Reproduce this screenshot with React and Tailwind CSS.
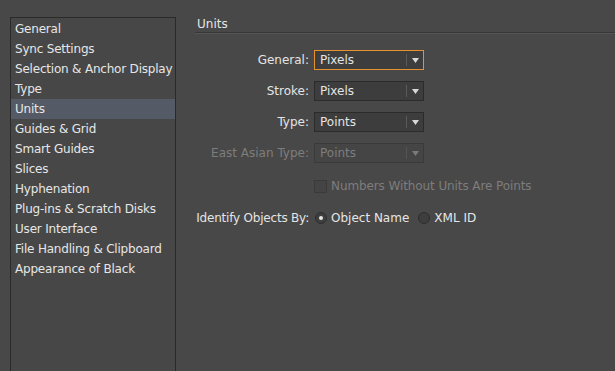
import React from "react";

const items = [
  "General",
  "Sync Settings",
  "Selection & Anchor Display",
  "Type",
  "Units",
  "Guides & Grid",
  "Smart Guides",
  "Slices",
  "Hyphenation",
  "Plug-ins & Scratch Disks",
  "User Interface",
  "File Handling & Clipboard",
  "Appearance of Black",
];

function Select({ value, focused, disabled }) {
  return (
    <div
      className={
        "flex h-[20px] w-[110px] items-center border " +
        (focused
          ? "border-[#e5912f] bg-[#3d3d3d]"
          : disabled
          ? "border-[#3a3a3a] bg-[#454545]"
          : "border-[#2b2b2b] bg-[#3d3d3d]")
      }
    >
      <span
        className={
          "flex-1 pl-[5px] leading-none " +
          (disabled ? "text-[#7d7d7d]" : "text-[#e4e4e4]")
        }
      >
        {value}
      </span>
      <div
        className={
          "h-[12px] w-px " + (disabled ? "bg-[#545454]" : "bg-[#5a5a5a]")
        }
      />
      <div className="flex w-[16px] justify-center">
        <svg width="7" height="5" viewBox="0 0 7 5">
          <path
            d="M0 0 L7 0 L3.5 5 Z"
            fill={disabled ? "#7a7a7a" : "#d8d8d8"}
          />
        </svg>
      </div>
    </div>
  );
}

function Row({ label, children, disabled }) {
  return (
    <div className="flex h-[20px] items-center">
      <div
        className={
          "w-[115px] pr-[1px] text-right whitespace-nowrap " +
          (disabled ? "text-[#7d7d7d]" : "text-[#e4e4e4]")
        }
      >
        {label}
      </div>
      <div className="ml-[4px]">{children}</div>
    </div>
  );
}

function Radio({ checked }) {
  return (
    <div className="flex h-[12px] w-[12px] items-center justify-center rounded-full border border-[#2e2e2e] bg-[#3e3e3e]">
      {checked && <div className="h-[4px] w-[4px] rounded-full bg-[#e6e6e6]" />}
    </div>
  );
}

export default function App() {
  return (
    <div
      className="flex h-[371px] w-[615px] overflow-hidden bg-[#484848] text-[12px]"
      style={{ fontFamily: '"DejaVu Sans", "Open Sans", sans-serif' }}
    >
      <div className="ml-[10px] mt-[17px] w-[166px] shrink-0 border border-b-0 border-[#2a2a2a] bg-[#474747] pt-[1px]">
        {items.map((it) => (
          <div
            key={it}
            className={
              "flex h-[20px] items-center pl-[4px] text-[#e6e6e6] tracking-[-0.2px] " +
              (it === "Units" ? "bg-[#545b66]" : "")
            }
          >
            {it}
          </div>
        ))}
      </div>
      <div className="ml-[19px] flex-1">
        <div className="mt-[16px] flex h-[16px] items-center pl-[2px] text-[#e6e6e6]">
          Units
        </div>
        <div className="h-px bg-[#373737]" />
        <div className="h-px bg-[#555555]" />
        <div className="mt-[16px] flex flex-col gap-[11px]">
          <Row label="General:">
            <Select value="Pixels" focused />
          </Row>
          <Row label="Stroke:">
            <Select value="Pixels" />
          </Row>
          <Row label="Type:">
            <Select value="Points" />
          </Row>
          <Row label="East Asian Type:" disabled>
            <Select value="Points" disabled />
          </Row>
        </div>
        <div className="mt-[16px] flex h-[14px] items-center pl-[119px]">
          <div className="h-[13px] w-[13px] border border-[#3a3a3a] bg-[#444444]" />
          <span className="ml-[4px] tracking-[-0.1px] text-[#7d7d7d]">
            Numbers Without Units Are Points
          </span>
        </div>
        <div className="mt-[15px] flex h-[20px] items-center">
          <div className="flex w-[115px] justify-end pr-[1px] whitespace-nowrap tracking-[-0.2px] text-[#e4e4e4]">
            Identify Objects By:
          </div>
          <div className="ml-[5px] flex items-center">
            <Radio checked />
            <span className="ml-[4px] text-[#e6e6e6]">Object Name</span>
            <div className="ml-[9px]">
              <Radio />
            </div>
            <span className="ml-[4px] text-[#e6e6e6]">XML ID</span>
          </div>
        </div>
      </div>
    </div>
  );
}
